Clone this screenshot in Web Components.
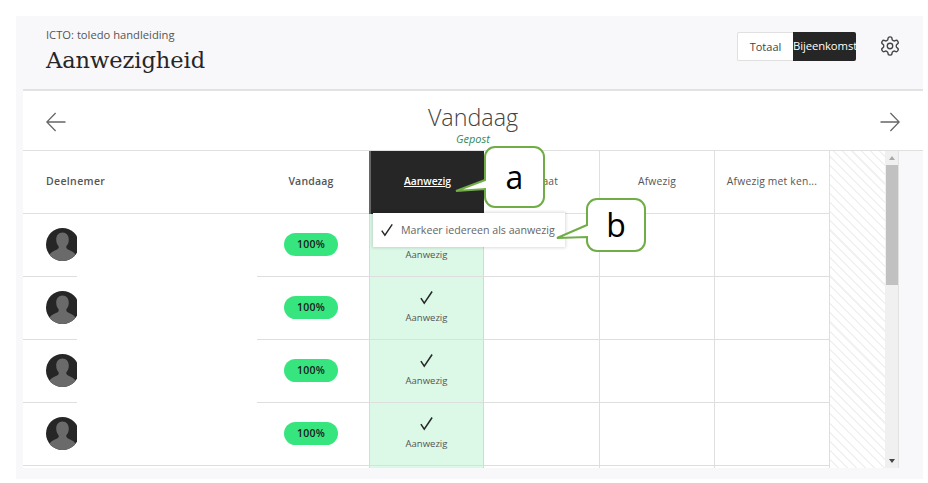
<!DOCTYPE html>
<html lang="nl">
  <head>
    <meta charset="UTF-8" />
    <title>Aanwezigheid</title>
    <style>
      html, body { margin: 0; background: #fff; }
      body {
        padding: 16px 5px 4px 16px;
        font-family: "Open Sans", "Noto Sans", sans-serif;
        color: #555;
      }
    </style>
  </head>

  <body>
    <att-page>
      <att-header course="ICTO: toledo handleiding" title="Aanwezigheid">
        <att-toggle></att-toggle>
      </att-header>
      <att-datenav label="Vandaag" status="Gepost"></att-datenav>
      <att-table>
        <att-menu slot="overlay">Markeer iedereen als aanwezig</att-menu>
        <att-callout slot="overlay" kind="a">a</att-callout>
        <att-callout slot="overlay" kind="b">b</att-callout>
      </att-table>
    </att-page>

    <script type="module">
      // kleine helper, elk element krijgt zijn eigen open shadow root
      class Base extends HTMLElement {
        render(html) {
          this.attachShadow({ mode: "open" }).innerHTML = html;
        }
      }

      const check = (size) => `<svg width="${size}" height="${size}" viewBox="0 0 16 16" fill="none" stroke="#262626" stroke-width="1.6"><path d="M2 8.6 L5.6 14 L14 1.6"/></svg>`;

      class AttPage extends Base {
        connectedCallback() {
          this.render(`<style>
            :host { display: block; height: 463px; background: #f8f8fb; padding-left: 7px; box-sizing: border-box; }
          </style><slot></slot>`);
        }
      }

      class AttHeader extends Base {
        connectedCallback() {
          this.render(`<style>
            :host { display: flex; justify-content: space-between; height: 75px; box-sizing: border-box; border-bottom: 2px solid #e2e2e4; padding: 11px 23px 0 23px; }
            .course { font-size: 11.2px; line-height: 16px; color: #555; }
            h1 { margin: 1px 0 0; font: 400 22.5px/32px "DejaVu Serif", "Liberation Serif", serif; color: #262626; letter-spacing: -0.05px; }
          </style>
          <div><div class="course">${this.getAttribute("course")}</div><h1>${this.getAttribute("title")}</h1></div>
          <slot></slot>`);
        }
      }

      class AttToggle extends Base {
        connectedCallback() {
          this.render(`<style>
            :host { display: flex; align-items: flex-start; gap: 24px; padding-top: 5px; }
            .group { display: flex; height: 29px; line-height: 27px; box-sizing: border-box; }
            .off { width: 56px; text-align: center; font-size: 11px; background: #fff; border: 1px solid #e0e0e0; border-right: 0; box-sizing: border-box; color: #444; border-radius: 2px 0 0 2px; }
            .on { width: 63px; text-align: center; font-size: 11.3px; background: #262626; color: #fff; white-space: nowrap; letter-spacing: -0.1px; border-radius: 0 2px 2px 0; }
            svg { margin-top: 4px; }
          </style>
          <div class="group"><div class="off">Totaal</div><div class="on">Bijeenkomst</div></div>
          <svg width="20" height="20" viewBox="1 1 22 22" fill="none" stroke="#444" stroke-width="1.5"><path d="M12.22 2h-.44a2 2 0 0 0-2 2v.18a2 2 0 0 1-1 1.73l-.43.25a2 2 0 0 1-2 0l-.15-.08a2 2 0 0 0-2.73.73l-.22.38a2 2 0 0 0 .73 2.73l.15.1a2 2 0 0 1 1 1.72v.51a2 2 0 0 1-1 1.74l-.15.09a2 2 0 0 0-.73 2.73l.22.38a2 2 0 0 0 2.73.73l.15-.08a2 2 0 0 1 2 0l.43.25a2 2 0 0 1 1 1.73V20a2 2 0 0 0 2 2h.44a2 2 0 0 0 2-2v-.18a2 2 0 0 1 1-1.73l.43-.25a2 2 0 0 1 2 0l.15.08a2 2 0 0 0 2.73-.73l.22-.39a2 2 0 0 0-.73-2.73l-.15-.08a2 2 0 0 1-1-1.74v-.5a2 2 0 0 1 1-1.74l.15-.09a2 2 0 0 0 .73-2.73l-.22-.38a2 2 0 0 0-2.73-.73l-.15.08a2 2 0 0 1-2 0l-.43-.25a2 2 0 0 1-1-1.73V4a2 2 0 0 0-2-2z"/><circle cx="12" cy="12" r="3"/></svg>`);
        }
      }

      class AttDatenav extends Base {
        connectedCallback() {
          const arrow = (d) => `<svg width="20" height="20" viewBox="0 0 20 20" fill="none" stroke="#666" stroke-width="1.3"><path d="${d}"/></svg>`;
          this.render(`<style>
            :host { display: flex; align-items: center; justify-content: space-between; height: 60px; box-sizing: border-box; background: #fff; border-bottom: 1px solid #e0e0e0; padding: 2px 23px 0; }
            .mid { text-align: center; margin-top: -2px; padding-top: 4px; }
            .label { font-size: 23.3px; font-weight: 300; line-height: 32px; color: #444; }
            .status { font-size: 11px; line-height: 12px; font-style: italic; color: #2e8b57; }
          </style>
          ${arrow("M19.5 10H.8M9.6 1 .8 10l8.8 9")}
          <div class="mid"><div class="label">${this.getAttribute("label")}</div><div class="status">${this.getAttribute("status")}</div></div>
          ${arrow("M.5 10h18.7M10.4 1l8.8 9-8.8 9")}`);
        }
      }

      class AttTable extends Base {
        connectedCallback() {
          // de vijfde rij valt bijna helemaal weg onder de rand
          const rows = [0, 1, 2, 3].map((i) => `<att-row${i === 3 ? " closed" : ""}></att-row>`).join("") + `<att-row empty></att-row>`;
          this.render(`<style>
            :host { display: flex; position: relative; height: 317px; }
            .rows { width: 807px; overflow: hidden; background: #fff; }
            .hatch { width: 55px; background: repeating-linear-gradient(45deg, #fff 0 5px, #f1f1f1 5px 6.5px); }
            .bar { width: 14px; box-sizing: border-box; background: #f0f0f0; border-right: 1px solid #e2e2e2; position: relative; display: flex; flex-direction: column; align-items: center; justify-content: space-between; padding: 5px 0; }
            .thumb { position: absolute; left: 1px; right: 0; top: 14px; height: 120px; background: #c1c1c1; }
            .up { border: 3.5px solid transparent; border-top: 0; border-bottom: 4px solid #a8a8a8; }
            .down { border: 3.5px solid transparent; border-bottom: 0; border-top: 4px solid #444; }
          </style>
          <div class="rows"><att-head></att-head>${rows}</div>
          <div class="hatch"></div>
          <div class="bar"><div class="up"></div><div class="thumb"></div><div class="down"></div></div>
          <slot name="overlay"></slot>`);
        }
      }

      const columns = "grid-template-columns: 54px 180px 112px 115px 116px 115px 115px;";

      class AttHead extends Base {
        connectedCallback() {
          this.render(`<style>
            :host { display: grid; ${columns} height: 63px; font-size: 10.3px; letter-spacing: .2px; }
            div { display: flex; align-items: center; justify-content: center; box-sizing: border-box; border-bottom: 1px solid #e0e0e0; border-right: 1px solid #e0e0e0; color: #555; white-space: nowrap; padding-bottom: 3px; }
            .name { grid-column: 1 / 3; justify-content: flex-start; padding-left: 23px; font-weight: 600; border-right: 0; font-size: 10.5px; letter-spacing: .35px; }
            .today { font-weight: 600; border-right: 0; padding-right: 4px; font-size: 10.5px; letter-spacing: .2px; }
            .active { background: #262626; color: #fff; font-weight: 600; font-size: 10.3px; letter-spacing: 0; text-decoration: underline; border-left: 2px solid #666; border-right: 0; border-bottom: 0; }
          </style>
          <div class="name">Deelnemer</div>
          <div class="today">Vandaag</div>
          <div class="active">Aanwezig</div>
          <div>Te laat</div>
          <div>Afwezig</div>
          <div>Afwezig met ken...</div>`);
        }
      }

      class AttRow extends Base {
        connectedCallback() {
          const empty = this.hasAttribute("empty");
          const avatar = `<svg width="33" height="33" viewBox="0 0 33 33"><defs><clipPath id="r"><circle cx="16.5" cy="16.5" r="16.5"/></clipPath></defs><g clip-path="url(#r)"><rect width="33" height="33" fill="#262626"/><path d="M16.5 4.500c3.900 0 6.300 3 6.300 7 0 3-1.100 5.400-2.500 6.800-.3 1.600.5 2.600 2.200 3.400 3 1.300 5.400 2.400 6.500 4.300V33H4v-6.900c1.100-1.900 3.500-3 6.500-4.300 1.700-.8 2.500-1.800 2.200-3.400-1.400-1.400-2.500-3.800-2.500-6.800 0-4 2.400-7 6.300-7z" fill="#6a6a6a"/></g></svg>`;
          this.render(`<style>
            :host { display: grid; ${columns} height: 63px; font-size: 9.5px; }
            .c { box-sizing: border-box; border-bottom: 1px solid #dedede; border-right: 1px solid #dedede; display: flex; align-items: center; justify-content: center; }
            .avatar { justify-content: flex-start; padding: 0 0 2px 23px; overflow: hidden; border-right: 0; }
            .name { border-right: 0; border-bottom-color: ${this.hasAttribute("closed") ? "#dedede" : "transparent"}; }
            .pct { border-right: 0; padding: 0 4px 1px 0; }
            .pill { width: 54px; height: 23px; border-radius: 12px; background: #37e57f; color: #1a1a1a; font-size: 10.5px; line-height: 23px; font-weight: 600; letter-spacing: .2px; text-align: center; }
            .ok { background: #dcf8e7; flex-direction: column; justify-content: flex-start; gap: 6px; border-left: 1px solid #d2dfd6; border-right: 1px solid #cfdcd3; color: #555; padding-top: 13px; }
            .ok span { line-height: 13px; }
            svg { flex: none; display: block; }
          </style>
          <div class="c avatar">${empty ? "" : avatar}</div>
          <div class="c name"></div>
          <div class="c pct">${empty ? "" : `<div class="pill">100%</div>`}</div>
          <div class="c ok">${empty ? "" : `${check(15)}<span>Aanwezig</span>`}</div>
          <div class="c"></div>
          <div class="c"></div>
          <div class="c"></div>`);
        }
      }

      class AttMenu extends Base {
        connectedCallback() {
          this.render(`<style>
            :host { position: absolute; left: 350px; top: 62px; width: 192px; height: 34px; box-sizing: border-box; display: flex; align-items: center; gap: 7px; padding-left: 7px; background: #fff; box-shadow: 0 0 3px 1px rgba(0,0,0,.14); font-size: 10.65px; color: #666; white-space: nowrap; }
          </style>${check(14)}<slot></slot>`);
        }
      }

      class AttCallout extends Base {
        connectedCallback() {
          const a = this.getAttribute("kind") === "a";
          // pad per callout: afgeronde rechthoek met punt naar links
          const path = a
            ? "M45 14a10 10 0 0 1 10-10h39a10 10 0 0 1 10 10v40a10 10 0 0 1-10 10h-39a10 10 0 0 1-10-10v-8L16 48 45 37z"
            : "M45 13a10 10 0 0 1 10-10h38a10 10 0 0 1 10 10v32a10 10 0 0 1-10 10h-38a10 10 0 0 1-10-10v-4L15 42 45 29z";
          this.render(`<style>
            :host { position: absolute; left: ${a ? 417 : 519}px; top: ${a ? -8 : 45}px; width: 110px; height: 70px; }
            svg { position: absolute; inset: 0; }
            span { position: absolute; left: 45px; width: ${a ? 59 : 58}px; top: ${a ? 4 : 3}px; height: ${a ? 60 : 52}px; text-align: center; font: 400 32px/${a ? 60 : 52}px "Open Sans", sans-serif; color: #000; }
          </style>
          <svg width="110" height="70" viewBox="0 0 110 70"><path d="${path}" fill="#fff" stroke="#70ad47" stroke-width="2"/></svg>
          <span><slot></slot></span>`);
        }
      }

      window.customElements.define("att-page", AttPage);
      window.customElements.define("att-header", AttHeader);
      window.customElements.define("att-toggle", AttToggle);
      window.customElements.define("att-datenav", AttDatenav);
      window.customElements.define("att-table", AttTable);
      window.customElements.define("att-head", AttHead);
      window.customElements.define("att-row", AttRow);
      window.customElements.define("att-menu", AttMenu);
      window.customElements.define("att-callout", AttCallout);
    </script>
  </body>
</html>
